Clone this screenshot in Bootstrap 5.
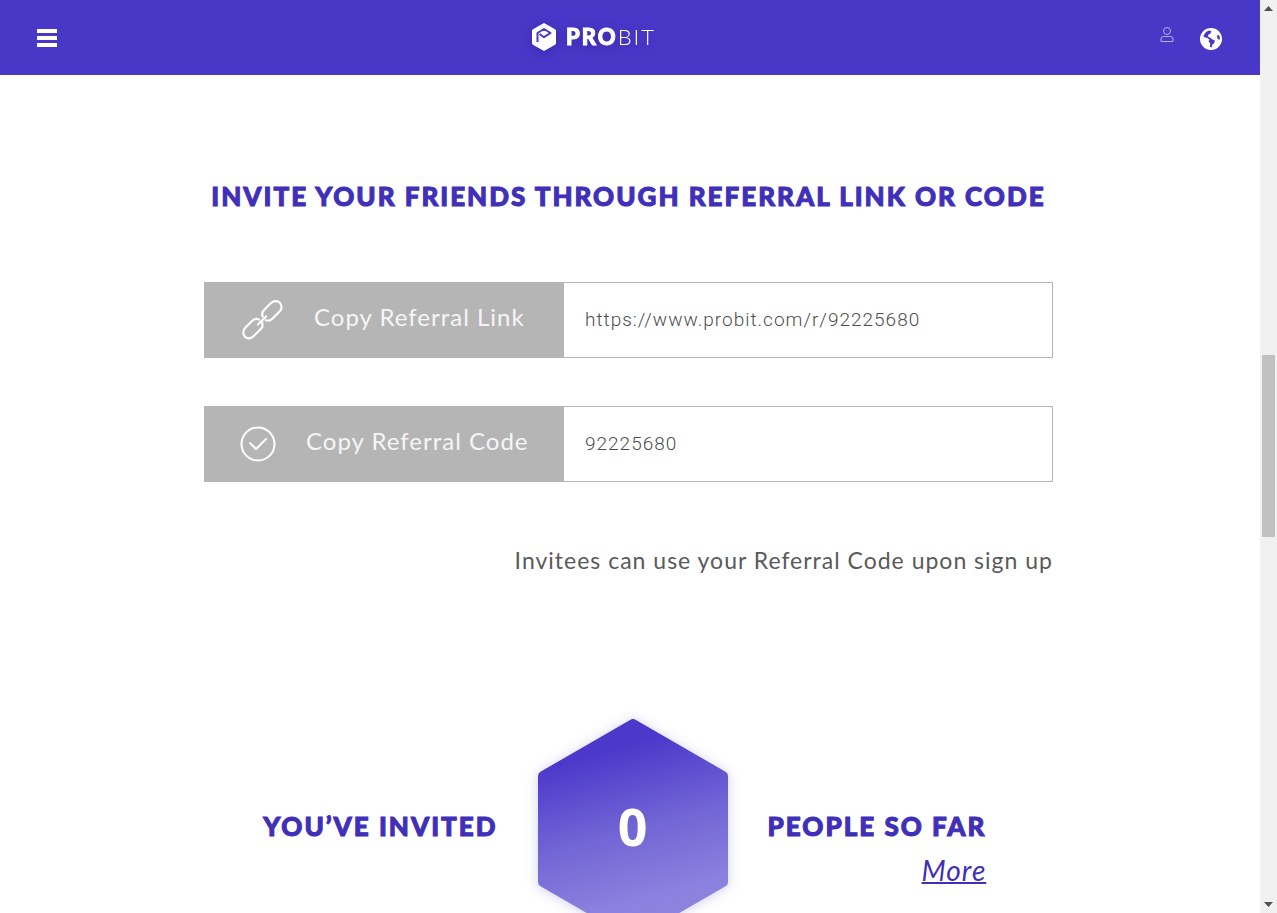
<!DOCTYPE html>
<html lang="en">
<head>
<meta charset="utf-8">
<meta name="viewport" content="width=device-width, initial-scale=1">
<title>ProBit Referral</title>
<link href="https://cdn.jsdelivr.net/npm/bootstrap@5.3.0/dist/css/bootstrap.min.css" rel="stylesheet">
<style>
  :root { --brand: #4937c8; --brand-text: #402fb8; --muted: #b5b5b5; }
  body { font-family: Lato, sans-serif; color: #5a5a5a; background: #fff; }
  svg { display: block; }
  .topbar { height: 75px; background: var(--brand); padding: 0 37px 2px 36px; }
  .topbar .side { flex: 1 1 0; }
  .wordmark { font-size: 22px; line-height: 28px; letter-spacing: 2px; color: #fff; font-weight: 300; }
  .wordmark b { font-weight: 900; -webkit-text-stroke: 1px; }
  .brand-logo { filter: drop-shadow(0 2px 6px rgba(20, 10, 110, .35)); gap: 9px; margin-right: 72px; }
  .page-body { padding-right: 3px; }
  .referral { max-width: 849px; padding-top: 103px; }
  .headline { font-size: 26px; line-height: 36px; font-weight: 900; letter-spacing: 2px; color: var(--brand-text); -webkit-text-stroke: 1px; }
  .copy-list { margin-top: 68px; gap: 48px; }
  .copy-row { height: 76px; border: 1px solid var(--muted); }
  .copy-btn { width: 359px; background: var(--muted); color: #f5f5f5; font-size: 24px; line-height: 30px; letter-spacing: 1px; gap: 30px; padding: 0 0 0 35px; }
  .copy-btn span { padding-bottom: 6px; }
  .copy-value { font: 300 19px/28px Roboto, sans-serif; letter-spacing: 1px; color: #4d4d4d; padding: 0 21px; outline-offset: -2px; }
  .hint { font-size: 23px; line-height: 32px; letter-spacing: 1px; margin-top: 62px; }
  .hexagon { width: 230px; height: 254px; margin: 0 20px; }
  .hexagon svg { filter: drop-shadow(0 1px 6px rgba(73, 55, 200, .25)); }
  .hex-count { font: 700 52px/60px "Noto Sans", sans-serif; color: #fff; }
  .invited { margin-top: 123px; }
  .invited .caption-side { flex: 1 1 0; padding-top: 109px; }
  .more { font-size: 28px; line-height: 36px; letter-spacing: 1px; color: var(--brand-text); margin-top: 8px; text-decoration-thickness: 2px; }
  .scrollbar { width: 17px; background: #f1f1f1; padding: 6px 2px; }
  .thumb { height: 182px; background: #c1c1c1; }
  .above { flex: 343 1 0; }
  .below { flex: 364 1 0; }
</style>
<script src="https://cdn.jsdelivr.net/npm/bootstrap@5.3.0/dist/js/bootstrap.bundle.min.js"></script>
</head>
<body class="vh-100 overflow-hidden d-flex">
<div class="flex-grow-1 vh-100 overflow-hidden">
  <header class="topbar d-flex align-items-center">
    <div class="side">
      <button class="btn p-0 border-0" type="button" aria-label="Menu">
        <svg width="22" height="20" viewBox="0 0 22 20" fill="#fff"><path d="M1 1h20v4H1zM1 8h20v4H1zM1 15h20v4H1z"/></svg>
      </button>
    </div>
    <a class="brand-logo d-flex align-items-center text-decoration-none" href="#">
      <svg width="26" height="28" viewBox="0 0 26 28"><path d="M13 .5 24.500 7v14L13 27.500 1.500 21V7z" fill="#fff" stroke="#fff" stroke-linejoin="round"/><path d="M6.500 19V10L13 6l6.500 4-6.500 4.200L8.500 11" fill="none" stroke="#4937c8" stroke-width="2" stroke-linejoin="round"/></svg>
      <div class="wordmark"><b>PRO</b>BIT</div>
    </a>
    <div class="side d-flex justify-content-end align-items-center">
      <button class="btn p-0 border-0 me-4 pb-1" type="button" aria-label="Account">
        <svg width="16" height="20" viewBox="0 0 16 20" fill="none" stroke="#b8b0ec"><circle cx="8" cy="6" r="3.500"/><path d="M2 16.500v-2.500a2.500 2.500 0 0 1 2.500-2.500h7a2.500 2.500 0 0 1 2.500 2.500v2.500z"/></svg>
      </button>
      <button class="btn p-0 border-0 pt-1" type="button" aria-label="Language">
        <svg width="24" height="24" viewBox="0 0 24 24"><circle cx="12" cy="12" r="11" fill="#fff"/><path d="M4.500 8.500 7 5l3-1.500 2.500.7L11.500 6.500l-2 1-.7 1.700 1.400 1 2 1 .2.800 3.400 1.500-.5 2.500-1.800 1.500-1 3-1.500-.5.200-3.800-1.600-1.700.8-2-2-1.500L4.800 10zM18 8.500l2-.5 1 3-.8 2-1.800-1.500z" fill="#4937c8"/></svg>
      </button>
    </div>
  </header>

  <div class="page-body">
  <main class="referral mx-auto">
    <h1 class="headline mb-0 text-center text-nowrap">INVITE YOUR FRIENDS THROUGH REFERRAL LINK OR CODE</h1>
    <div class="copy-list d-flex flex-column">
      <div class="copy-row d-flex">
        <button class="copy-btn btn rounded-0 border-0 d-flex align-items-center flex-shrink-0 text-nowrap" type="button">
          <svg width="44" height="44" viewBox="0 0 44 44" fill="none" stroke="#fff" stroke-width="2.200" stroke-linecap="round" stroke-linejoin="round"><path d="M22.500 18.500c-1-3 0-5 1.500-6.500l6.500-6.500c3-3 7-3 9.300-.7s2.300 6 0 8.500l-7.500 7.500c-2 2-4.500 2.200-6.500 1.500"/><path d="M22 24.500c1.200 3 .5 5-1.200 6.500l-7 7c-3 3-6.500 3-8.800.7s-2.500-6.200.5-9.200l6.500-6.500c2.200-2.200 4.800-2.500 7-1.500M18 26.500l8-8"/></svg>
          <span>Copy Referral Link</span>
        </button>
        <input class="copy-value border-0 w-100" type="text" value="https://www.probit.com/r/92225680" aria-label="Referral link" readonly>
      </div>
      <div class="copy-row d-flex">
        <button class="copy-btn btn rounded-0 border-0 d-flex align-items-center flex-shrink-0 text-nowrap" type="button">
          <svg width="36" height="36" viewBox="0 0 36 36" fill="none" stroke="#fff" stroke-width="2"><circle cx="18" cy="18" r="16.500"/><path d="m10 17 6 6 10-10" stroke-linecap="round" stroke-linejoin="round"/></svg>
          <span>Copy Referral Code</span>
        </button>
        <input class="copy-value border-0 w-100" type="text" value="92225680" aria-label="Referral code" readonly>
      </div>
    </div>
    <p class="hint mb-0 text-end">Invitees can use your Referral Code upon sign up</p>

    <section class="invited d-flex ps-2">
      <div class="caption-side text-end"><h2 class="headline mb-0">YOU’VE INVITED</h2></div>
      <div class="hexagon position-relative flex-shrink-0">
        <svg width="230" height="254" viewBox="0 0 230 254">
          <defs><linearGradient id="hex" gradientUnits="userSpaceOnUse" x1="85" y1="20" x2="145" y2="240"><stop offset=".14" stop-color="#4c39cb"/><stop offset=".5" stop-color="#7265d5"/><stop offset=".8" stop-color="#8b80de"/><stop offset="1" stop-color="#9188e0"/></linearGradient></defs>
          <path d="M115 25 205 77v106l-90 52-90-52V77z" fill="url(#hex)" stroke="url(#hex)" stroke-width="10" stroke-linejoin="round"/>
        </svg>
        <div class="hex-count position-absolute top-50 start-50 translate-middle">0</div>
      </div>
      <div class="caption-side"><div class="d-inline-block text-end"><h2 class="headline mb-0">PEOPLE SO FAR</h2><a class="more d-inline-block fst-italic" href="#">More</a></div></div>
    </section>
  </main>
  </div>
</div>
<aside class="scrollbar vh-100 flex-shrink-0 d-flex flex-column align-items-center" aria-hidden="true">
  <svg width="9" height="5" viewBox="0 0 9 5"><path d="M4.500 0 9 5H0z" fill="#505050"/></svg>
  <div class="above"></div>
  <div class="thumb w-100"></div>
  <div class="below"></div>
  <svg width="9" height="5" viewBox="0 0 9 5"><path d="M0 0h9L4.500 5z" fill="#505050"/></svg>
</aside>
</body>
</html>
